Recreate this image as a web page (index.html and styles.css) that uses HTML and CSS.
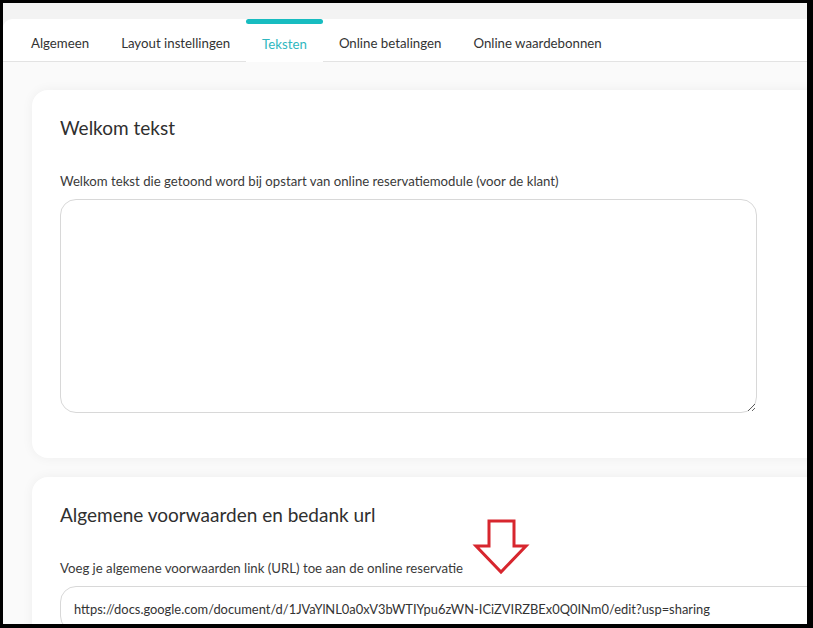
FILE: index.html
```html
<!DOCTYPE html>
<html lang="nl">

<head>
	<meta charset="UTF-8">
	<meta name="viewport" content="width=device-width, initial-scale=1.0">
	<title>Instellingen - Teksten</title>
	<link rel="stylesheet" href="styles.css">
</head>

<body>
	<div class="frame">
		<div class="page">
			<nav class="tabs">
				<a class="tab">Algemeen</a>
				<a class="tab">Layout instellingen</a>
				<a class="tab active">Teksten</a>
				<a class="tab">Online betalingen</a>
				<a class="tab">Online waardebonnen</a>
			</nav>

			<div class="content">
				<section class="card">
					<h2 class="cardTitle">Welkom tekst</h2>
					<label class="label" for="welcome">Welkom tekst die getoond word bij opstart van online reservatiemodule (voor de klant)</label>
					<textarea id="welcome" class="textArea"></textarea>
				</section>

				<section class="card">
					<h2 class="cardTitle">Algemene voorwaarden en bedank url</h2>
					<label class="label" for="terms">Voeg je algemene voorwaarden link (URL) toe aan de online reservatie</label>
					<input id="terms" class="textInput" type="text" value="https://docs.google.com/document/d/1JVaYlNL0a0xV3bWTIYpu6zWN-ICiZVIRZBEx0Q0INm0/edit?usp=sharing">

					<svg class="arrow" width="60" height="60" viewBox="0 0 60 60">
						<polygon points="17,3 42,3 42,28 54,28 29,54 4,28 17,28" fill="none" stroke="#d7262e" stroke-width="3" stroke-linejoin="miter"/>
					</svg>
				</section>
			</div>
		</div>
	</div>
</body>

</html>
```

FILE: styles.css
```css
* {
	box-sizing: border-box;
}

body {
	margin: 0;
	font-family: "Lato", "Open Sans", sans-serif;
	color: #333;
}

.frame {
	width: 813px;
	height: 628px;
	border-style: solid;
	border-color: #000;
	border-width: 3px 6px 4px 3px;
	overflow: hidden;
}

.page {
	height: 100%;
	background: #f3f3f3;
	padding-top: 16px;
}

.tabs {
	display: flex;
	height: 43px;
	padding-left: 12px;
	background: #fff;
	border-radius: 9px 0 0 0;
	border-bottom: 1px solid #e3e3e3;
}

.tab {
	display: flex;
	align-items: center;
	padding: 6px 16px 0;
	font-size: 13.25px;
	color: #333;
	cursor: pointer;
}

.tab.active {
	position: relative;
	color: #2fb7c0;
	background: #fff;
	margin-bottom: -1px;
}

.tab.active::before {
	content: "";
	position: absolute;
	top: 0;
	left: 0;
	right: 0;
	height: 5px;
	border-radius: 3px;
	background: #17bcc0;
}

.content {
	height: 100%;
	background: #fafafa;
	padding: 28px 0 0 29px;
}

.card {
	position: relative;
	width: 820px;
	background: #fff;
	border-radius: 16px;
	box-shadow: 0 0 12px rgba(0, 0, 0, 0.05);
	padding: 26px 0 45px 28px;
	margin-bottom: 19px;
}

.cardTitle {
	margin: 0 0 34px;
	font-size: 19px;
	font-weight: 400;
	color: #2f2f2f;
}

.label {
	display: block;
	margin-bottom: 10px;
	font-size: 13.2px;
	color: #3a3a3a;
}

.textArea {
	display: block;
	width: 697px;
	height: 214px;
	border: 1px solid #d8d8d8;
	border-radius: 16px;
	resize: both;
	font-family: inherit;
}

.textInput {
	display: block;
	width: 780px;
	height: 46px;
	padding: 0 13px;
	border: 1px solid #d8d8d8;
	border-radius: 16px;
	font-family: inherit;
	font-size: 12.9px;
	color: #333;
}

.arrow {
	position: absolute;
	left: 440px;
	top: 41px;
}
```
